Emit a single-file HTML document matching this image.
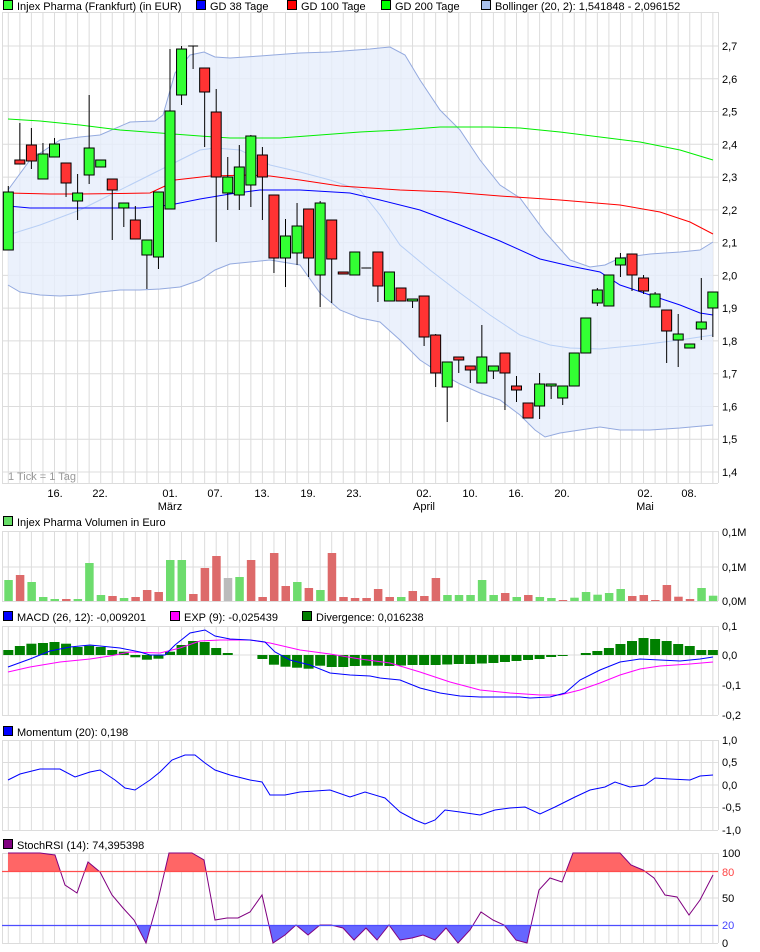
<!DOCTYPE html>
<html><head><meta charset="utf-8"><style>
html,body{margin:0;padding:0;background:#fff;width:760px;height:952px;overflow:hidden}
svg{display:block;font-family:"Liberation Sans",sans-serif;font-size:11px}
</style></head><body>
<svg id="s" width="760" height="952" xmlns="http://www.w3.org/2000/svg"></svg>
<script>
var S=document.getElementById('s'),o='';
function X(i){return 8.3+11.55*i;}
function pl(p){return p.map(function(a){return a[0]+','+a[1]}).join(' ');}
function line(x1,y1,x2,y2,c,w){o+='<line x1="'+x1+'" y1="'+y1+'" x2="'+x2+'" y2="'+y2+'" stroke="'+c+'" stroke-width="'+(w||1)+'"/>';}
function txt(x,y,t,a,c){o+='<text x="'+x+'" y="'+y+'" fill="'+(c||'#000')+'"'+(a?' text-anchor="'+a+'"':'')+'>'+t+'</text>';}
function grid(top,bot,hs){
  for(var i=0;i<62;i++)line(X(i),top,X(i),bot,'#dcdcdc');
  hs.forEach(function(y){line(2,y,718,y,'#dcdcdc');});
  line(2.5,top,2.5,bot,'#dcdcdc');line(718.5,top,718.5,bot,'#dcdcdc');
  line(2,top+.5,718,top+.5,'#dcdcdc');line(2,bot+.5,718,bot+.5,'#dcdcdc');
}
function leg(x,y,c,t){o+='<rect x="'+(x+.5)+'" y="'+(y-9.5)+'" width="9" height="9" fill="'+c+'" stroke="#000"/>';txt(x+14,y,t);}
var hs=[];for(var k=0;k<14;k++)hs.push(46+32.77*k);
grid(12,483,hs);
var lab=['2,7','2,6','2,5','2,4','2,3','2,2','2,1','2,0','1,9','1,8','1,7','1,6','1,5','1,4'];
lab.forEach(function(l,k){txt(722,hs[k]+4,l);});
leg(3,10,'#33ff33','Injex Pharma (Frankfurt) (in EUR)');
leg(196,10,'#0000ff','GD 38 Tage');
leg(287,10,'#ff0000','GD 100 Tage');
leg(381,10,'#00ff00','GD 200 Tage');
leg(481,10,'#a8c0ec','Bollinger (20, 2): 1,541848 - 2,096152');
var up=[[8,190],[30,160],[60,140],[80,137],[100,135],[130,122],[155,121],[163,115],[175,73],[190,55],[204,52],[215,57],[230,58],[260,56],[300,53],[330,52],[370,49],[390,47],[405,55],[420,80],[440,110],[460,130],[480,160],[500,185],[520,198],[545,232],[570,260],[590,267],[605,265],[620,258],[650,254],[680,252],[700,250],[713,242]];
var lo=[[8,285],[20,292],[40,295],[60,296],[80,295],[100,292],[120,290],[140,290],[160,289],[180,287],[200,280],[215,270],[230,264],[250,262],[270,260],[300,265],[320,293],[340,310],[360,318],[380,322],[400,340],[420,360],[440,373],[460,384],[480,393],[500,400],[520,415],[535,430],[545,437],[560,433],[580,430],[600,427],[620,430],[650,430],[680,428],[713,425]];
o+='<polygon points="'+pl(up)+' '+pl(lo.slice().reverse())+'" fill="#e6eefb" fill-opacity=".8"/>';
o+='<polyline points="'+pl(up)+'" fill="none" stroke="#94aadf"/>';
o+='<polyline points="'+pl(lo)+'" fill="none" stroke="#94aadf"/>';
var mid=[[8,235],[40,225],[80,210],[100,200],[130,185],[160,170],[180,160],[200,150],[215,148],[240,150],[270,165],[300,172],[330,180],[360,190],[380,215],[400,245],[430,270],[460,293],[490,315],[520,335],[550,345],[570,348],[600,349],[640,345],[680,340],[713,335]];
o+='<polyline points="'+pl(mid)+'" fill="none" stroke="#b8cff5"/>';
var g200=[[8,119],[40,121],[80,125],[120,130],[160,133],[200,136],[230,138],[280,138],[320,135],[360,132],[400,130],[440,127],[490,127],[520,128],[560,132],[600,137],[640,142],[680,150],[713,160]];
var g100=[[8,193],[50,194],[80,194],[150,193],[165,186],[175,180],[210,176],[250,175],[270,176],[300,180],[340,186],[400,190],[450,192],[500,196],[560,200],[620,205],[660,212],[690,222],[713,234]];
var g38=[[8,206],[30,208],[80,208],[140,208],[170,205],[200,199],[230,194],[260,190],[300,190],[350,193],[380,200],[420,210],[460,225],[500,241],[540,259],[570,266],[600,272],[620,285],[650,295],[680,305],[700,313],[713,315]];
o+='<polyline points="'+pl(g200)+'" fill="none" stroke="#00ee00"/>';
o+='<polyline points="'+pl(g100)+'" fill="none" stroke="#ff0000"/>';
o+='<polyline points="'+pl(g38)+'" fill="none" stroke="#0000ff"/>';
var C=[['g',192,250,186,250],['r',160,164,123,164],['r',145,161,128,169],['g',154,179,143,179],['g',144,157,138,157],['r',163,183,163,197],['g',193,201,174,220],['g',148,175,95,184],['g',160,167,160,167],['r',179,190,179,240],
['g',203,208,203,227],['r',220,239,206,239],['g',240,255,240,289],['g',192,257,192,269],['g',111,209,49,209],['g',49,95,46,105],['d',46,46,46,69],['r',68,92,68,147],['r',112,177,89,242],['g',177,193,157,210],
['g',167,195,145,210],['g',136,185,135,207],['r',155,177,147,220],['r',195,258,195,273],['g',236,258,219,287],['g',226,253,203,265],['r',209,258,209,277],['g',203,275,201,307],['r',220,259,220,303],['r',272,274,272,274],
['g',252,275,252,275],['d',268,268,268,268],['r',252,286,252,302],['g',272,301,272,301],['r',288,301,288,301],['g',299,301,299,308],['r',296,337,296,346],['r',335,373,334,387],['g',362,387,362,422],['r',357,360,357,373],
['r',366,370,366,383],['g',357,383,325,383],['g',366,371,366,379],['r',353,373,353,410],['r',386,390,376,402],['r',403,418,403,418],['g',384,406,373,419],['g',384,386,384,399],['g',386,398,386,405],['g',353,386,353,386],
['g',318,353,318,353],['g',290,303,288,306],['g',275,306,275,306],['g',258,265,253,277],['r',254,275,254,291],['r',278,291,275,294],['g',294,307,292,307],['r',310,331,310,363],['g',334,340,314,367],['g',344,348,344,348],
['g',322,329,278,340],['g',292,308,292,337]];
C.forEach(function(c,i){var x=X(i);
  line(x,c[3],x,c[4],'#000');
  if(c[0]=='d'){line(x-5,c[1],x+5,c[1],'#000');return;}
  var h=Math.max(c[2]-c[1],2);
  o+='<rect x="'+(x-5)+'" y="'+c[1]+'" width="10" height="'+h+'" fill="'+(c[0]=='g'?'#33ff33':'#ff3333')+'" stroke="#000"/>';
});
txt(8,480,'1 Tick = 1 Tag',null,'#999');
[[55,'16.'],[100,'22.'],[170,'01.','März'],[215,'07.'],[262,'13.'],[308,'19.'],[354,'23.'],[424,'02.','April'],[470,'10.'],[516,'16.'],[562,'20.'],[645,'02.','Mai'],[689,'08.']].forEach(function(a){txt(a[0],497,a[1],'middle');if(a[2])txt(a[0],510,a[2],'middle');});
grid(531,601,[567]);
txt(722,536,'0,1M');txt(722,571,'0,1M');txt(722,605,'0,0M');
leg(3,526,'#66dd66','Injex Pharma Volumen in Euro');
var V=[['g',580],['r',575],['g',582],['g',597],['g',599],['r',599],['g',599],['g',563],['g',595],['r',596],['g',598],['r',597],['r',590],['r',592],['g',560],['g',560],['r',594],['r',568],['r',556],['n',578],['g',577],['r',560],['r',597],['r',553],['r',586],['g',582],['r',588],['g',590],['r',553],['r',597],['r',598],['r',598],['r',589],['r',597],['g',597],['r',591],['r',596],['r',578],['g',595],['g',595],['g',595],['g',580],['g',595],['r',593],['g',597],['r',595],['g',597],['g',598],['r',600],['g',597.7],['g',592],['g',594.7],['g',593],['g',589],['r',596],['r',595],['r',600],['r',585],['r',596.7],['r',599],['g',588],['g',595.7]];
V.forEach(function(v,i){var x=X(i);o+='<rect x="'+(x-4)+'" y="'+v[1]+'" width="8.5" height="'+(601-v[1])+'" fill="'+(v[0]=='g'?'#6ddc6d':v[0]=='r'?'#dd6a6a':'#bbbbbb')+'"/>';});
grid(626,715,[655,685]);
txt(722,630,'0,1');txt(722,659,'0,0');txt(722,689,'-0,1');txt(722,719,'-0,2');
leg(3,621,'#0000ff','MACD (26, 12): -0,009201');
leg(170,621,'#ff00ff','EXP (9): -0,025439');
leg(302,621,'#008000','Divergence: 0,016238');
var D=[650,646,643.7,643,642,643.7,647,645.7,647,650,651.7,657.3,659.7,658.7,651.7,645,641,642,648,653,655,655,659,664.7,666.7,667.7,668.7,665.7,667,667,666,665.7,665.7,666,665.5,665,665,665,664.5,664,664,663.5,663,662,661,660,659,657,656,655,653,651,648,644,641,638,639,641,644,646,650,650];
D.forEach(function(d,i){if(Math.abs(d-655)<0.5)return;var x=X(i);var t=Math.min(d,655),b=Math.max(d,655);o+='<rect x="'+(x-5)+'" y="'+t+'" width="10" height="'+(b-t)+'" fill="#008000"/>';});
var M=[[8,667],[30,659],[50,651],[70,647],[90,645],[100,646],[120,648],[140,652],[150,655],[165,655],[175,645],[190,633],[205,630],[215,636],[230,639],[250,640],[265,642],[275,652],[290,660],[310,665],[330,673],[350,675],[370,676],[380,678],[400,680],[420,688],[440,693],[460,696],[480,697],[520,697],[530,698],[550,697],[565,693],[580,680],[600,670],[620,662],[640,659],[660,660],[680,661],[700,659],[713,657]];
var E=[[8,672],[30,667],[60,662],[90,659],[110,656],[130,652],[160,653],[180,648],[200,641],[220,640],[250,640],[270,643],[300,650],[330,654],[360,659],[390,663],[420,672],[450,682],[480,690],[510,693],[540,695],[560,695],[580,690],[600,683],[620,675],[640,669],[660,666],[690,664],[713,662]];
o+='<polyline points="'+pl(E)+'" fill="none" stroke="#ff00ff"/>';
o+='<polyline points="'+pl(M)+'" fill="none" stroke="#0000ff"/>';
grid(740,830,[762.5,785,807.5]);
txt(722,744,'1,0');txt(722,766,'0,5');txt(722,789,'0,0');txt(722,811,'-0,5');txt(722,834,'-1,0');
leg(3,736,'#0000ff','Momentum (20): 0,198');
var MO=[[8,780],[20,774],[40,769],[60,769],[75,777],[90,772],[100,770],[115,780],[125,788],[135,790],[150,780],[160,772],[172,760],[185,755],[195,755],[205,763],[215,770],[230,775],[250,780],[262,782],[270,795],[285,795],[300,792],[330,790],[350,797],[365,792],[385,798],[400,812],[415,820],[425,824],[435,820],[445,810],[460,812],[480,815],[495,810],[510,808],[525,807],[540,814],[555,807],[575,797],[590,790],[605,787],[615,782],[630,787],[645,785],[655,778],[670,779],[690,780],[700,776],[713,775]];
o+='<polyline points="'+pl(MO)+'" fill="none" stroke="#0000ff"/>';
grid(853,943,[898]);
txt(722,857,'100');txt(722,902,'50');txt(722,947,'0');
txt(722,876,'80',null,'#ff4444');txt(722,929,'20',null,'#4444ff');
leg(3,849,'#800080','StochRSI (14): 74,395398');
var R=[[8,853],[20,853],[40,853],[55,855],[65,885],[77,893],[88,862],[100,872],[112,895],[123,908],[134,920],[146,943],[158,900],[169,853],[181,853],[192,853],[204,860],[215,920],[227,918],[238,918],[250,912],[262,895],[273,943],[285,935],[296,925],[308,935],[320,925],[331,925],[343,928],[354,940],[366,928],[377,940],[389,925],[400,940],[412,938],[423,935],[435,940],[446,928],[458,943],[470,930],[481,912],[493,920],[504,925],[516,940],[527,943],[539,890],[550,878],[562,882],[573,853],[585,853],[596,853],[608,853],[620,853],[631,865],[643,870],[654,878],[665,895],[677,897],[689,915],[700,900],[713,875]];
o+='<defs><clipPath id="ca"><rect x="0" y="840" width="760" height="31.5"/></clipPath><clipPath id="cb"><rect x="0" y="925" width="760" height="30"/></clipPath></defs>';
o+='<polygon clip-path="url(#ca)" points="8,871.5 '+pl(R)+' 713,871.5" fill="#ff6666"/>';
o+='<polygon clip-path="url(#cb)" points="8,925 '+pl(R)+' 713,925" fill="#6666ff"/>';
o+='<polyline points="'+pl(R)+'" fill="none" stroke="#800080"/>';
line(2,871.5,718,871.5,'#ff4d4d',1.2);line(2,925.5,718,925.5,'#4d4dff',1.2);
S.innerHTML=o;
</script>
</body></html>
